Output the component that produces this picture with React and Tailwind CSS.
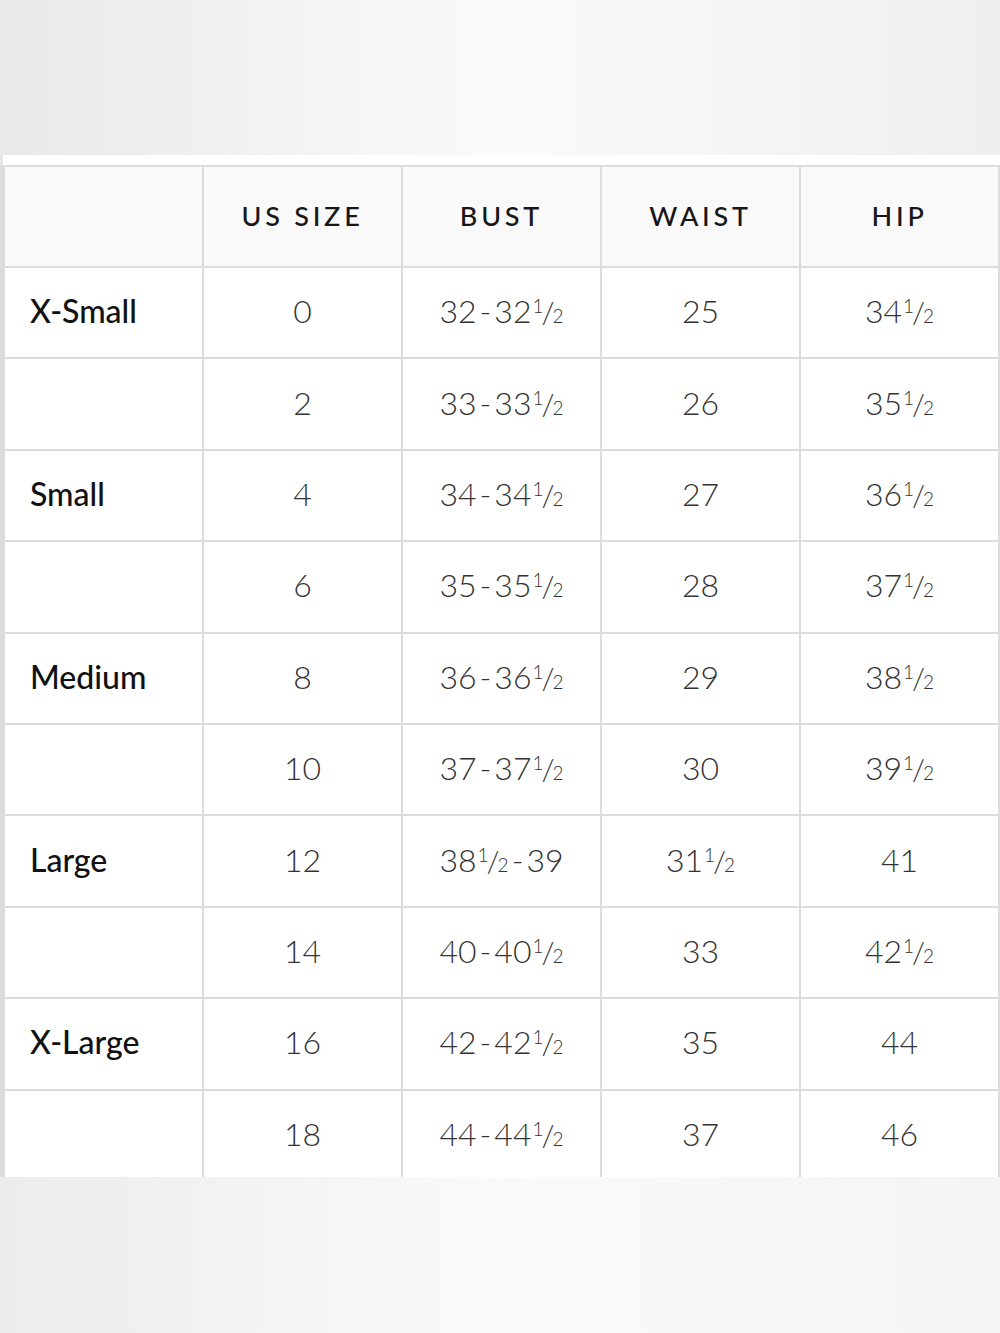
const rows = [
  ["X-Small", "0", "32-32½", "25", "34½"],
  ["", "2", "33-33½", "26", "35½"],
  ["Small", "4", "34-34½", "27", "36½"],
  ["", "6", "35-35½", "28", "37½"],
  ["Medium", "8", "36-36½", "29", "38½"],
  ["", "10", "37-37½", "30", "39½"],
  ["Large", "12", "38½-39", "31½", "41"],
  ["", "14", "40-40½", "33", "42½"],
  ["X-Large", "16", "42-42½", "35", "44"],
  ["", "18", "44-44½", "37", "46"],
];

const headers = ["", "US SIZE", "BUST", "WAIST", "HIP"];

// draw ½ and the dash a bit wider, like the chart's typeface
const Measure = ({ text }) => {
  return (
    <span className="whitespace-nowrap">
      {text.split("").map((ch, i) => {
        if (ch === "½")
          return (
            <span key={i} className="inline-block ml-[1px]">
              <span className="text-[19px] align-[0.55em]">1</span>
              <span className="text-[30px] mx-[-2px]">/</span>
              <span className="text-[19px]">2</span>
            </span>
          );
        if (ch === "-")
          return (
            <span key={i} className="mx-[3px]">
              -
            </span>
          );
        return <span key={i}>{ch}</span>;
      })}
    </span>
  );
};

const SizeChart = () => {
  return (
    <div className="w-[1000px] h-[1333px] flex flex-col bg-white" style={{ fontFamily: "Lato, 'Open Sans', sans-serif" }}>
      <div className="h-[155px] shrink-0 bg-gradient-to-r from-[#e9e9e9] via-[#fafafa] to-[#efefef]" />
      <div className="h-[10px] shrink-0 bg-white border-l-[3px] border-[#e6e6e6]" />
      <div className="h-[1012px] shrink-0 overflow-hidden bg-[#dcdcdc] pl-[5px] pr-[2px] pt-[2px]">
        <div className="grid grid-cols-5 gap-[2px]">
          {headers.map((h, i) => (
            <div
              key={i}
              className="h-[99px] bg-[#f9f9f9] flex items-center justify-center text-[27px] font-medium tracking-[0.14em] text-[#161616]"
            >
              {h}
            </div>
          ))}
          {rows.map((r, ri) =>
            r.map((c, ci) => (
              <div
                key={ri + "-" + ci}
                className={`h-[89.4px] bg-white flex items-center pb-[3px] leading-none ${
                  ci === 0
                    ? "justify-start pl-[25px] text-[32px] font-medium text-[#111]"
                    : "justify-center text-[32px] font-light text-[#333]"
                }`}
              >
                {ci === 0 ? c : <Measure text={c} />}
              </div>
            ))
          )}
        </div>
      </div>
      <div className="flex-1 bg-gradient-to-r from-[#ececec] via-[#fafafa] to-[#f4f4f4]" />
    </div>
  );
};

export default SizeChart;
